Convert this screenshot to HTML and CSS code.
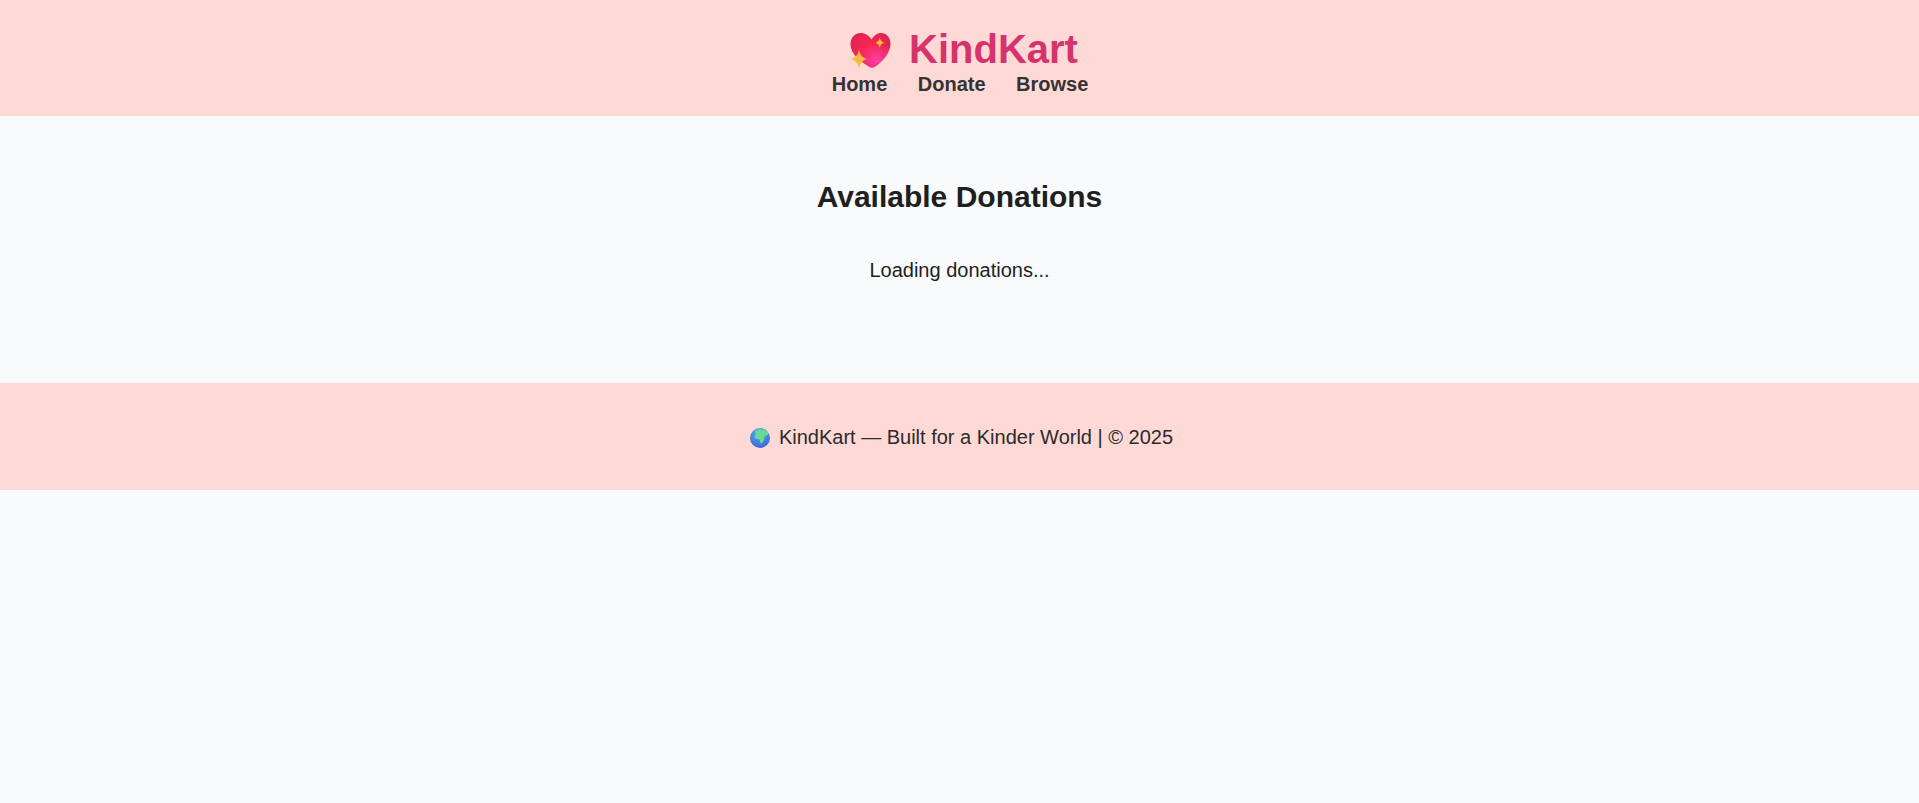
FILE: index.html
```html
<!DOCTYPE html>
<html lang="en">
<head>
  <meta charset="UTF-8">
  <title>KindKart</title>
  <link rel="stylesheet" href="styles.css">
</head>
<body>
<header class="site-header">
  <h1 class="logo">
    <svg class="logo-icon" viewBox="0 0 44 44" aria-hidden="true">
      <defs>
        <radialGradient id="heartFill" cx="0.5" cy="0.4" r="0.7">
          <stop offset="0" stop-color="#f8284f"/>
          <stop offset="0.55" stop-color="#ea2553"/>
          <stop offset="1" stop-color="#c9234f"/>
        </radialGradient>
        <radialGradient id="heartGlow" cx="0.66" cy="0.8" r="0.5">
          <stop offset="0" stop-color="#ff3fa6"/>
          <stop offset="1" stop-color="#ff3fa6" stop-opacity="0"/>
        </radialGradient>
      </defs>
      <path d="M23.500 11.500C26 7 30 5 33 5C38.500 5 42.500 9.500 42.500 16C42.500 24 35 33 28 38C25 40 23 40 20 38C12 33 2.500 26 2.500 16C2.500 9.500 7 5 13 5C17 5 21 7.500 23.500 11.500Z" fill="url(#heartFill)"/>
      <path d="M23.500 11.500C26 7 30 5 33 5C38.500 5 42.500 9.500 42.500 16C42.500 24 35 33 28 38C25 40 23 40 20 38C12 33 2.500 26 2.500 16C2.500 9.500 7 5 13 5C17 5 21 7.500 23.500 11.500Z" fill="url(#heartGlow)"/>
      <path d="M11 21C11.800 26 13 28.800 19 31C13 33.200 11.800 36 11 41C10.200 36 9 33.200 3 31C9 28.800 10.200 26 11 21Z" fill="#fdb83c"/>
      <path d="M31.700 9.500C32.200 12 33 13.600 36 14.700C33 15.800 32.200 17.500 31.700 20C31.200 17.500 30.400 15.800 27.500 14.700C30.400 13.600 31.200 12 31.700 9.500Z" fill="#fdb83c"/>
    </svg>
    <span>KindKart</span>
  </h1>
  <nav class="nav">
    <a href="#">Home</a>
    <a href="#">Donate</a>
    <a href="#">Browse</a>
  </nav>
</header>
<main class="content">
  <h2>Available Donations</h2>
  <p>Loading donations...</p>
</main>
<footer class="site-footer">
  <svg class="globe" viewBox="0 0 20 20" aria-hidden="true">
    <defs>
      <radialGradient id="seaFill" cx="0.45" cy="0.25" r="0.85">
        <stop offset="0" stop-color="#4fb0ea"/>
        <stop offset="1" stop-color="#3a5cd6"/>
      </radialGradient>
    </defs>
    <circle cx="10" cy="10" r="10" fill="url(#seaFill)"/>
    <path d="M5 3C8 0.500 14 0.500 17 3.500C18.500 5 19 6 18 7C16 8 15 8 14 9.500C15 11 13 13 12 15C11 16 10 15 10 13C10 11 8 11 6 10.500C4 10 4 7.500 6 7C7 6.500 5 5 5 3Z" fill="#66dc92"/>
  </svg>
  <span>KindKart — Built for a Kinder World | © 2025</span>
</footer>
</body>
</html>
```

FILE: styles.css
```css
* { box-sizing: border-box; }
body {
  margin: 0;
  min-height: 803px;
  background: #f8fafc;
  color: #1f1f1f;
  font-family: 'Liberation Sans', Arial, sans-serif;
}
.site-header {
  height: 116px;
  padding-top: 26px;
  background: #ffd9d6;
  text-align: center;
}
.logo {
  display: flex;
  justify-content: center;
  align-items: center;
  gap: 17px;
  margin: 0;
  padding-left: 7px;
  height: 47px;
  font-size: 40px;
  line-height: 47px;
  color: #d6336c;
}
.logo-icon {
  width: 44px;
  height: 44px;
}
.nav {
  display: flex;
  justify-content: center;
  gap: 30.5px;
  padding-left: 1px;
}
.nav a {
  font-size: 20px;
  font-weight: bold;
  color: #333;
  text-decoration: none;
}
.content {
  height: 267px;
  padding-top: 64px;
  text-align: center;
}
.content h2 {
  margin: 0;
  font-size: 30px;
  line-height: 34px;
}
.content p {
  margin: 45px 0 0;
  font-size: 20px;
  line-height: 23px;
}
.site-footer {
  display: flex;
  justify-content: center;
  align-items: center;
  gap: 9px;
  height: 107px;
  padding: 2px 0 0 4px;
  background: #ffd9d6;
  font-size: 20px;
  color: #2b2b2b;
}
.globe {
  width: 20px;
  height: 20px;
}
```
